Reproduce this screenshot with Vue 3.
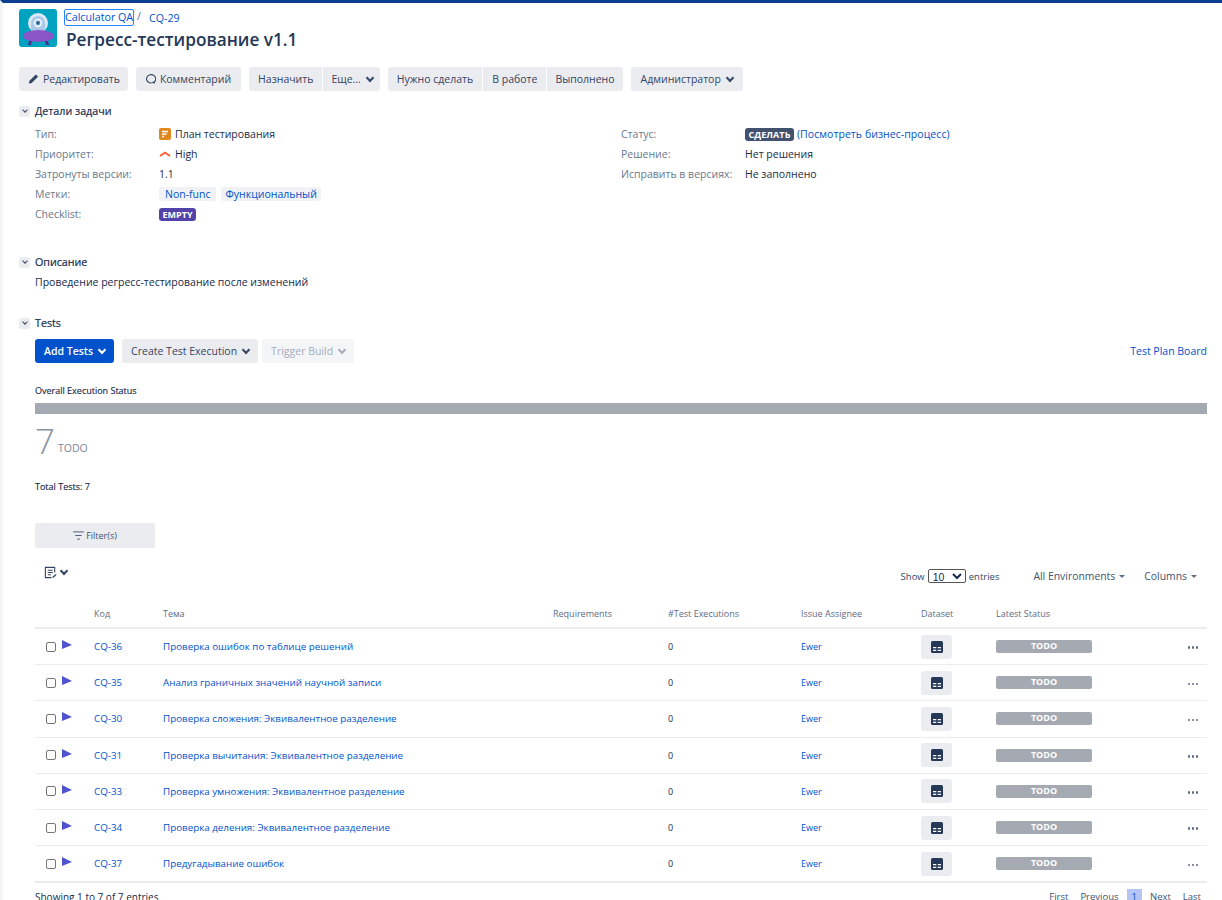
<script setup>
const details = [
  { label: 'Тип:', value: 'План тестирования', icon: 'plan' },
  { label: 'Приоритет:', value: 'High', icon: 'high' },
  { label: 'Затронуты версии:', value: '1.1' },
]

const tests = [
  { key: 'CQ-36', title: 'Проверка ошибок по таблице решений' },
  { key: 'CQ-35', title: 'Анализ граничных значений научной записи' },
  { key: 'CQ-30', title: 'Проверка сложения: Эквивалентное разделение' },
  { key: 'CQ-31', title: 'Проверка вычитания: Эквивалентное разделение' },
  { key: 'CQ-33', title: 'Проверка умножения: Эквивалентное разделение' },
  { key: 'CQ-34', title: 'Проверка деления: Эквивалентное разделение' },
  { key: 'CQ-37', title: 'Предугадывание ошибок' },
]
</script>

<template>
  <div class="page">
    <header class="issue-head">
      <svg class="avatar" viewBox="0 0 38 38">
        <rect width="38" height="38" rx="3" fill="#00a3bf" />
        <circle cx="19" cy="14" r="10" fill="#dce8f7" />
        <path d="M12 14a7 7 0 0 1 14 0v10H12z" fill="#a9c8ea" />
        <circle cx="19" cy="14" r="4.200" fill="#f4f8fd" />
        <circle cx="19" cy="14" r="2.400" fill="#5b8fc4" />
        <circle cx="19" cy="14" r="1" fill="#253858" />
        <ellipse cx="19.500" cy="27" rx="15.500" ry="6" fill="#8a55c7" />
        <path d="M10 32h3l-1 4h-3zM26 32h3l1 4h-3z" fill="#4d2f8a" />
      </svg>
      <div class="head-text">
        <div class="crumbs">
          <a class="crumb-focus">Calculator QA</a>
          <span class="slash">/</span>
          <a>CQ-29</a>
        </div>
        <h1>Регресс-тестирование v1.1</h1>
      </div>
    </header>

    <div class="toolbar">
      <button class="btn edit">
        <svg class="ico" viewBox="0 0 12 12"><path d="M1 11l.6-3L8 1.600a1 1 0 0 1 1.400 0l1 1a1 1 0 0 1 0 1.400L4 10.400z" fill="#344563" /></svg>
        Редактировать
      </button>
      <button class="btn comment">
        <svg class="ico" viewBox="0 0 12 12"><path d="M9.600 9.600A5 4.600 0 1 0 6 10.400c1 0 2-.2 2.800-.7l1.800.8z" fill="none" stroke="#344563" stroke-width="1.200" /></svg>
        Комментарий
      </button>
      <div class="btn-group">
        <button class="btn">Назначить</button>
        <button class="btn tight">Еще... <span class="chev"></span></button>
      </div>
      <div class="btn-group">
        <button class="btn">Нужно сделать</button>
        <button class="btn">В работе</button>
        <button class="btn done">Выполнено</button>
      </div>
      <button class="btn admin">Администратор <span class="chev"></span></button>
    </div>

    <section class="module details">
      <h2><span class="toggle"><span class="chev"></span></span>Детали задачи</h2>
      <div class="detail-cols">
        <dl class="left-col">
          <div v-for="row in details" :key="row.label" class="row">
            <dt>{{ row.label }}</dt>
            <dd>
              <svg v-if="row.icon === 'plan'" class="type-ico" viewBox="0 0 12 12">
                <rect width="12" height="12" rx="2" fill="#e2871c" />
                <path d="M3 3.500h6M3 6h4.500M3 8.500h2" stroke="#fff" stroke-width="1.300" />
              </svg>
              <svg v-if="row.icon === 'high'" class="type-ico" viewBox="0 0 12 12">
                <path d="M1 8l5-3.500L11 8" fill="none" stroke="#ff5630" stroke-width="1.800" />
              </svg>
              {{ row.value }}
            </dd>
          </div>
          <div class="row">
            <dt>Метки:</dt>
            <dd class="labels"><a class="label">Non-func</a><a class="label">Функциональный</a></dd>
          </div>
          <div class="row">
            <dt>Checklist:</dt>
            <dd><span class="lozenge purple">EMPTY</span></dd>
          </div>
        </dl>
        <dl class="right-col">
          <div class="row">
            <dt>Статус:</dt>
            <dd class="status-value"><span class="lozenge navy">СДЕЛАТЬ</span> <a>(Посмотреть бизнес-процесс)</a></dd>
          </div>
          <div class="row">
            <dt>Решение:</dt>
            <dd>Нет решения</dd>
          </div>
          <div class="row">
            <dt>Исправить в версиях:</dt>
            <dd>Не заполнено</dd>
          </div>
        </dl>
      </div>
    </section>

    <section class="module description">
      <h2><span class="toggle"><span class="chev"></span></span>Описание</h2>
      <p>Проведение регресс-тестирование после изменений</p>
    </section>

    <section class="module tests">
      <h2><span class="toggle"><span class="chev"></span></span>Tests</h2>
      <div class="tests-body">
        <div class="tests-actions">
          <button class="btn primary">Add Tests <span class="chev"></span></button>
          <button class="btn">Create Test Execution <span class="chev"></span></button>
          <button class="btn disabled">Trigger Build <span class="chev"></span></button>
          <a class="board-link">Test Plan Board</a>
        </div>

        <div class="overall-title">Overall Execution Status</div>
        <div class="overall-bar"></div>
        <div class="overall-count"><span class="big">7</span><span class="todo">TODO</span></div>
        <div class="total">Total Tests: 7</div>

        <button class="filter-btn">
          <svg class="filter-ico" viewBox="0 0 12 10"><path d="M0 1h12M2.500 5h7M4.500 9h3" stroke="#42526e" stroke-width="1" /></svg>
          Filter(s)
        </button>

        <div class="table-tools">
          <div class="list-tool">
            <svg class="list-ico" viewBox="0 0 14 14">
              <path d="M11.500 7V1.500H1.500v11H8" fill="none" stroke="#344563" stroke-width="1.200" />
              <path d="M4 4.500h5.500M4 7h5.500M4 9.500h3.500" stroke="#344563" stroke-width="1.100" />
              <path d="M9 13l.4-1.600L12.600 8.500l1 1-3 3z" fill="#344563" />
            </svg>
            <span class="chev"></span>
          </div>
          <div class="tools-right">
            <div class="show">Show
              <select><option>10</option></select>
              entries</div>
            <a class="drop envs">All Environments <span class="caret"></span></a>
            <a class="drop cols">Columns <span class="caret"></span></a>
          </div>
        </div>

        <table>
          <thead>
            <tr>
              <th class="c-check"></th>
              <th class="c-key">Код</th>
              <th class="c-title">Тема</th>
              <th class="c-req">Requirements</th>
              <th class="c-exec">#Test Executions</th>
              <th class="c-user">Issue Assignee</th>
              <th class="c-data">Dataset</th>
              <th class="c-status">Latest Status</th>
              <th class="c-more"></th>
            </tr>
          </thead>
          <tbody>
            <tr v-for="t in tests" :key="t.key">
              <td>
                <div class="pick">
                  <span class="box"></span>
                  <svg class="play" viewBox="0 0 10 10"><path d="M0 0l10 5-10 4z" fill="#5053cf" /></svg>
                </div>
              </td>
              <td class="wide"><a>{{ t.key }}</a></td>
              <td class="wide"><a>{{ t.title }}</a></td>
              <td></td>
              <td class="plain">0</td>
              <td><a>Ewer</a></td>
              <td>
                <span class="data-btn">
                  <svg viewBox="0 0 12 12" width="12" height="12">
                    <rect width="12" height="12" rx="1.500" fill="#253858" />
                    <path d="M2 6h3.300v1.300H2zM6.700 6H10v1.300H6.700zM2 8.700h3.300V10H2zM6.700 8.700H10V10H6.700z" fill="#fff" />
                  </svg>
                </span>
              </td>
              <td><span class="status">TODO</span></td>
              <td class="more"><span></span><span></span><span></span></td>
            </tr>
          </tbody>
        </table>

        <div class="table-foot">
          <span class="showing">Showing 1 to 7 of 7 entries</span>
          <div class="pager">
            <a>First</a><a>Previous</a><a class="current">1</a><a>Next</a><a>Last</a>
          </div>
        </div>
      </div>
    </section>
  </div>
</template>

<style>
html, body {
  margin: 0;
  height: 100%;
  overflow: hidden;
  background: #fff;
}
</style>

<style scoped>
.page {
  box-sizing: border-box;
  width: 1222px;
  height: 900px;
  overflow: hidden;
  border-top: 3px solid #0b3f8f;
  border-left: 3px solid #f4f5f7;
  padding: 0 15px 0 16px;
  font-family: "Open Sans", "Noto Sans", sans-serif;
  font-size: 10.500px;
  color: #172b4d;
}
a {
  color: #0052cc;
  text-decoration: none;
}

.issue-head {
  display: flex;
  gap: 9px;
  padding-top: 6px;
  height: 64px;
  box-sizing: border-box;
}
.avatar {
  width: 38px;
  height: 38px;
  flex: none;
}
.crumbs {
  display: flex;
  align-items: center;
  height: 17px;
  margin-left: -2px;
  font-size: 10.700px;
}
.crumb-focus {
  box-sizing: border-box;
  width: 70px;
  height: 17px;
  line-height: 14px;
  white-space: nowrap;
  border: 1.500px solid #2684ff;
  border-radius: 2px;
  text-align: center;
}
.slash {
  margin: -4px 8px 0 3px;
  color: #5e6c84;
}
h1 {
  margin: 2px 0 0;
  font-size: 17.200px;
  line-height: 24px;
  font-weight: 600;
  color: #253858;
}

.toolbar {
  display: flex;
  gap: 8px;
  height: 24px;
}
.btn-group {
  display: flex;
  gap: 1px;
}
.btn {
  display: inline-flex;
  align-items: center;
  justify-content: center;
  height: 24px;
  padding: 0 9px;
  gap: 4px;
  border: 0;
  border-radius: 3px;
  background: #ebecf0;
  color: #344563;
  font: inherit;
  white-space: nowrap;
}
.btn.edit {
  padding-right: 8px;
}
.btn.comment {
  padding-right: 10px;
}
.btn.tight {
  padding: 0 7px 0 8px;
}
.btn.done {
  padding: 0 8px;
}
.btn.admin {
  padding: 0 10px;
}
.btn-group .btn {
  border-radius: 0;
}
.btn-group .btn:first-child {
  border-radius: 3px 0 0 3px;
}
.btn-group .btn:last-child {
  border-radius: 0 3px 3px 0;
}
.ico {
  width: 11px;
  height: 12px;
}
.chev {
  display: inline-block;
  width: 4px;
  height: 4px;
  margin: 0 0 2px 2px;
  border-right: 2px solid currentColor;
  border-bottom: 2px solid currentColor;
  transform: rotate(45deg);
}

.module h2 {
  display: flex;
  align-items: center;
  margin: 0;
  height: 16px;
  font-size: 10.700px;
  font-weight: 400;
  color: #172b4d;
  -webkit-text-stroke: 0.2px #172b4d;
}
.toggle {
  display: inline-flex;
  align-items: center;
  justify-content: center;
  width: 11px;
  height: 11px;
  margin-right: 5px;
  background: #ebecf0;
  border-radius: 2px;
  color: #344563;
}
.toggle .chev {
  margin: 0 0 2px;
  width: 3px;
  height: 3px;
  border-width: 1.500px;
}
.details {
  margin-top: 12px;
}
.detail-cols {
  display: flex;
  margin-top: 5px;
  padding-left: 16px;
}
dl {
  margin: 0;
}
.left-col {
  width: 586px;
}
.row {
  display: flex;
  align-items: center;
  height: 20px;
}
dt {
  width: 124px;
  color: #6b778c;
}
dd {
  margin: 0;
  display: flex;
  align-items: center;
  gap: 4px;
  white-space: nowrap;
}
.status-value {
  gap: 3px;
  letter-spacing: 0.06px;
}
.type-ico {
  width: 12px;
  height: 12px;
}
.labels {
  gap: 5px;
}
.label {
  padding: 0 4px;
  height: 14px;
  line-height: 14px;
  background: #f1f2f5;
  border-radius: 2px;
}
.label:first-child {
  padding: 0 6px;
}
.lozenge {
  height: 13px;
  line-height: 13px;
  padding: 0 3.500px;
  font-size: 9px;
  font-weight: 700;
  color: #fff;
  border-radius: 3px;
}
.purple {
  background: #5243aa;
}
.navy {
  background: #42526e;
}

.description {
  margin-top: 30px;
}
.description p {
  margin: 4px 0 0;
  padding-left: 16px;
  line-height: 16px;
}

.tests {
  margin-top: 25px;
}
.tests-body {
  padding-left: 16px;
}
.tests-actions {
  display: flex;
  align-items: center;
  gap: 8px;
  margin-top: 8px;
}
.tests-actions .disabled {
  margin-left: -4px;
  background: #f4f5f7;
  color: #a5adba;
}
.primary {
  background: #0052cc;
  color: #fff;
  font-weight: 600;
}
.board-link {
  margin-left: auto;
}
.overall-title {
  margin-top: 21px;
  font-size: 9px;
  line-height: 14px;
  -webkit-text-stroke: 0.15px #172b4d;
}
.overall-bar {
  margin-top: 5px;
  height: 11px;
  background: #a5a9b1;
}
.overall-count {
  display: flex;
  align-items: flex-end;
  height: 44px;
  margin-top: 4px;
}
.big {
  font-size: 35px;
  line-height: 42px;
  font-weight: 300;
  color: #8993a4;
}
.todo {
  margin: 0 0 7px 3px;
  color: #7a869a;
}
.total {
  margin-top: 18px;
  font-size: 9px;
  line-height: 14px;
  -webkit-text-stroke: 0.15px #172b4d;
}
.filter-btn {
  display: flex;
  align-items: center;
  justify-content: center;
  gap: 2px;
  width: 120px;
  height: 25px;
  margin-top: 29px;
  border: 0;
  border-radius: 2px;
  background: #ebecf0;
  color: #42526e;
  font: inherit;
  font-size: 9px;
}
.filter-ico {
  width: 11px;
  height: 9px;
}
.table-tools {
  display: flex;
  justify-content: space-between;
  height: 52px;
  padding: 16px 10px 0 9px;
  box-sizing: border-box;
}
.list-tool {
  display: flex;
  height: 16px;
  align-items: center;
  color: #344563;
}
.list-ico {
  width: 13px;
  height: 13px;
}
.list-tool .chev {
  margin-left: 4px;
}
.tools-right {
  display: flex;
  align-items: center;
  height: 16px;
  margin-top: 4px;
  font-size: 9.500px;
}
.show {
  color: #344563;
  display: flex;
  align-items: center;
  gap: 3px;
}
select {
  width: 38px;
  height: 14px;
  padding: 0;
  font-family: "Liberation Sans", sans-serif;
  font-size: 10.500px;
  color: #172b4d;
  background: #fff;
  border: 1px solid #555;
  border-radius: 2px;
}
.drop {
  display: flex;
  align-items: center;
  color: #42526e;
  font-size: 10.400px;
}
.envs {
  margin-left: 34px;
}
.cols {
  margin-left: 19px;
}
.caret {
  width: 0;
  height: 0;
  margin-left: 4px;
  border: 3px solid transparent;
  border-top-color: #5e6c84;
  border-bottom: 0;
}

table {
  width: 1172px;
  table-layout: fixed;
  border-collapse: collapse;
  font-size: 9px;
}
th {
  height: 27px;
  padding: 0;
  text-align: left;
  font-weight: 400;
  color: #5e6c84;
  border-bottom: 2px solid #ebecf0;
}
td {
  height: 35.200px;
  padding: 0;
  border-bottom: 1px solid #ebecf0;
}
td.wide {
  font-size: 9.800px;
}
tbody tr:last-child td {
  border-bottom-width: 2px;
}
.c-check { width: 59px; }
.c-key { width: 69px; }
.c-title { width: 390px; }
.c-req { width: 115px; }
.c-exec { width: 133px; }
.c-user { width: 120px; }
.c-data { width: 75px; }
.c-status { width: 180px; }
.plain {
  color: #172b4d;
}
.pick {
  display: flex;
  align-items: center;
  gap: 6px;
  padding-left: 11px;
}
.box {
  box-sizing: border-box;
  width: 10px;
  height: 10px;
  border: 1px solid #767676;
  border-radius: 2px;
  background: #fff;
}
.play {
  width: 10px;
  height: 10px;
  margin-top: -3px;
}
.data-btn {
  display: flex;
  align-items: center;
  justify-content: center;
  width: 31px;
  height: 24px;
  background: #ebecf0;
  border-radius: 3px;
}
.status {
  display: block;
  width: 96px;
  height: 13px;
  line-height: 12px;
  text-align: center;
  background: #a5a9b1;
  border-radius: 2px;
  color: #fff;
  font-weight: 700;
}
.more {
  text-align: right;
  padding-right: 9px;
}
.more span {
  display: inline-block;
  width: 2.500px;
  height: 2.500px;
  margin-left: 1.500px;
  vertical-align: middle;
  background: #5e6c84;
  border-radius: 50%;
}
.table-foot {
  display: flex;
  justify-content: space-between;
  align-items: flex-start;
  margin-top: 7px;
}
.showing {
  font-size: 10px;
}
.pager {
  display: flex;
  align-items: flex-start;
  gap: 12px;
  margin-right: 6px;
  margin-top: -1px;
  font-size: 9.500px;
}
.pager a {
  color: #42526e;
  line-height: 16px;
}
.pager .current {
  padding: 0 5px;
  background: #b3c4f5;
  color: #0052cc;
  margin: 0 -4px;
  height: 16px;
}
</style>
